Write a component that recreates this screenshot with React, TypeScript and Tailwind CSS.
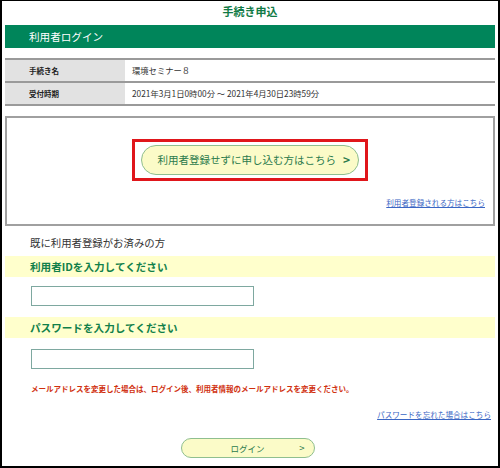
import React from 'react';

const font = { fontFamily: '"Noto Sans CJK JP", "Noto Sans", sans-serif' };

export default function App() {
    const rows = [
        { label: '手続き名', value: '環境セミナー８' },
        { label: '受付時期', value: '2021年3月1日0時00分 ～ 2021年4月30日23時59分' },
    ];

    return (
        <div style={font} className="w-[500px] h-[468px] bg-white border-black border-x-2 border-b-2 border-t overflow-hidden">
            <div className="px-[3px]">
                {/* Title */}
                <h1 className="h-[24px] pt-[2px] text-center text-[11px] leading-[16px] font-bold text-[#0f7a45]">手続き申込</h1>

                {/* Header bar */}
                <div className="h-[23px] bg-[#00855a] flex items-center pl-[24px] text-white text-[10.6px]">利用者ログイン</div>

                {/* Info table */}
                <div className="mt-[10px] border-t-2 border-[#9a9a9a]">
                    {rows.map((row) => (
                        <div key={row.label} className="flex h-[23px] border-b-2 border-[#9a9a9a]">
                            <div className="w-[120px] bg-[#e2e2e2] flex items-center pl-[24px] text-[7.5px] font-bold text-[#222]">{row.label}</div>
                            <div className="flex-1 flex items-center pl-[7px] text-[8.3px] text-[#333]">{row.value}</div>
                        </div>
                    ))}
                </div>

                {/* Guest box */}
                <div className="mt-[10px] h-[110px] border-2 border-[#a0a0a0] flex flex-col items-center">
                    <div className="mt-[21px] border-[3px] border-[#e0161b] px-[6px] py-[3px]">
                        <button className="h-[30px] w-[218px] rounded-full border border-[#8fbf8f] bg-[#fbfbc8] flex items-center justify-end pr-[8px] gap-[7px] whitespace-nowrap text-[10.5px] text-[#2a7a4c]">
                            <span>利用者登録せずに申し込む方はこちら</span>
                            <span className="font-bold text-[12px]">&gt;</span>
                        </button>
                    </div>
                    <div className="w-full flex justify-end pr-[8px] mt-[16px]">
                        <a className="text-[7.6px] text-[#3a66c4] underline">利用者登録される方はこちら</a>
                    </div>
                </div>

                {/* Login */}
                <p className="mt-[9px] pl-[25px] text-[10.4px] leading-[16px] text-[#333]">既に利用者登録がお済みの方</p>

                <div className="mt-[5px] h-[21px] bg-[#ffffcc] flex items-center pl-[25px] text-[10.6px] font-bold text-[#11804a]">利用者IDを入力してください</div>
                <div className="mt-[9px] pl-[26px]">
                    <input className="block w-[223px] h-[20px] border border-[#7ea8a0] bg-white outline-none" />
                </div>

                <div className="mt-[11px] h-[21px] bg-[#ffffcc] flex items-center pl-[25px] text-[10.6px] font-bold text-[#11804a]">パスワードを入力してください</div>
                <div className="mt-[11px] pl-[26px]">
                    <input type="password" className="block w-[223px] h-[20px] border border-[#7ea8a0] bg-white outline-none" />
                </div>

                <p className="mt-[14px] pl-[26px] text-[7.5px] leading-[12px] font-bold text-[#d0300e]">メールアドレスを変更した場合は、ログイン後、利用者情報のメールアドレスを変更ください。</p>

                <div className="mt-[14px] flex justify-end pr-[4px]">
                    <a className="text-[7.6px] leading-[12px] text-[#3a66c4] underline">パスワードを忘れた場合はこちら</a>
                </div>

                <div className="mt-[17px] flex justify-center pr-[5px]">
                    <button className="relative h-[20px] w-[134px] rounded-full border border-[#8fbf8f] bg-[#fbfbc8] flex items-center justify-center text-[8.5px] text-[#2a7a4c]">
                        <span>ログイン</span>
                        <span className="absolute right-[9px] text-[9.5px]">&gt;</span>
                    </button>
                </div>
            </div>
        </div>
    );
}
